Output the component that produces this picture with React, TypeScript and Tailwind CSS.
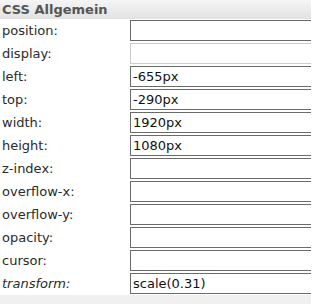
import React from "react";

const rows: { label: string; value: string; italic?: boolean; light?: boolean }[] = [
  { label: "position:", value: "" },
  { label: "display:", value: "", light: true },
  { label: "left:", value: "-655px" },
  { label: "top:", value: "-290px" },
  { label: "width:", value: "1920px" },
  { label: "height:", value: "1080px" },
  { label: "z-index:", value: "" },
  { label: "overflow-x:", value: "" },
  { label: "overflow-y:", value: "" },
  { label: "opacity:", value: "" },
  { label: "cursor:", value: "" },
  { label: "transform:", value: "scale(0.31)", italic: true },
];

export default function App() {
  return (
    <div
      className="w-[311px] h-[304px] overflow-hidden bg-white"
      style={{ fontFamily: '"DejaVu Sans", Verdana, sans-serif' }}
    >
      <div className="h-[19px] bg-gradient-to-b from-[#f5f5f5] to-[#e2e2e2] pl-[2px] flex items-center text-[13px] font-bold text-[#555555] leading-none">
        CSS Allgemein
      </div>
      <div className="flex flex-col">
        {rows.map((r) => (
          <div key={r.label} className="h-[23px] flex items-center">
            <div
              className={`w-[130px] shrink-0 pl-[2px] text-[13px] text-[#2a2a2a] leading-none ${
                r.italic ? "italic" : ""
              }`}
            >
              {r.label}
            </div>
            <div
              className={`h-[21px] w-[200px] shrink-0 border ${
                r.light ? "border-[#cccccc]" : "border-[#6a6a6a]"
              } bg-white flex items-center pl-[2px] text-[13px] text-[#111111] leading-none`}
            >
              {r.value}
            </div>
          </div>
        ))}
      </div>
      <div className="h-[12px] bg-[#f0f0f0]" />
    </div>
  );
}
